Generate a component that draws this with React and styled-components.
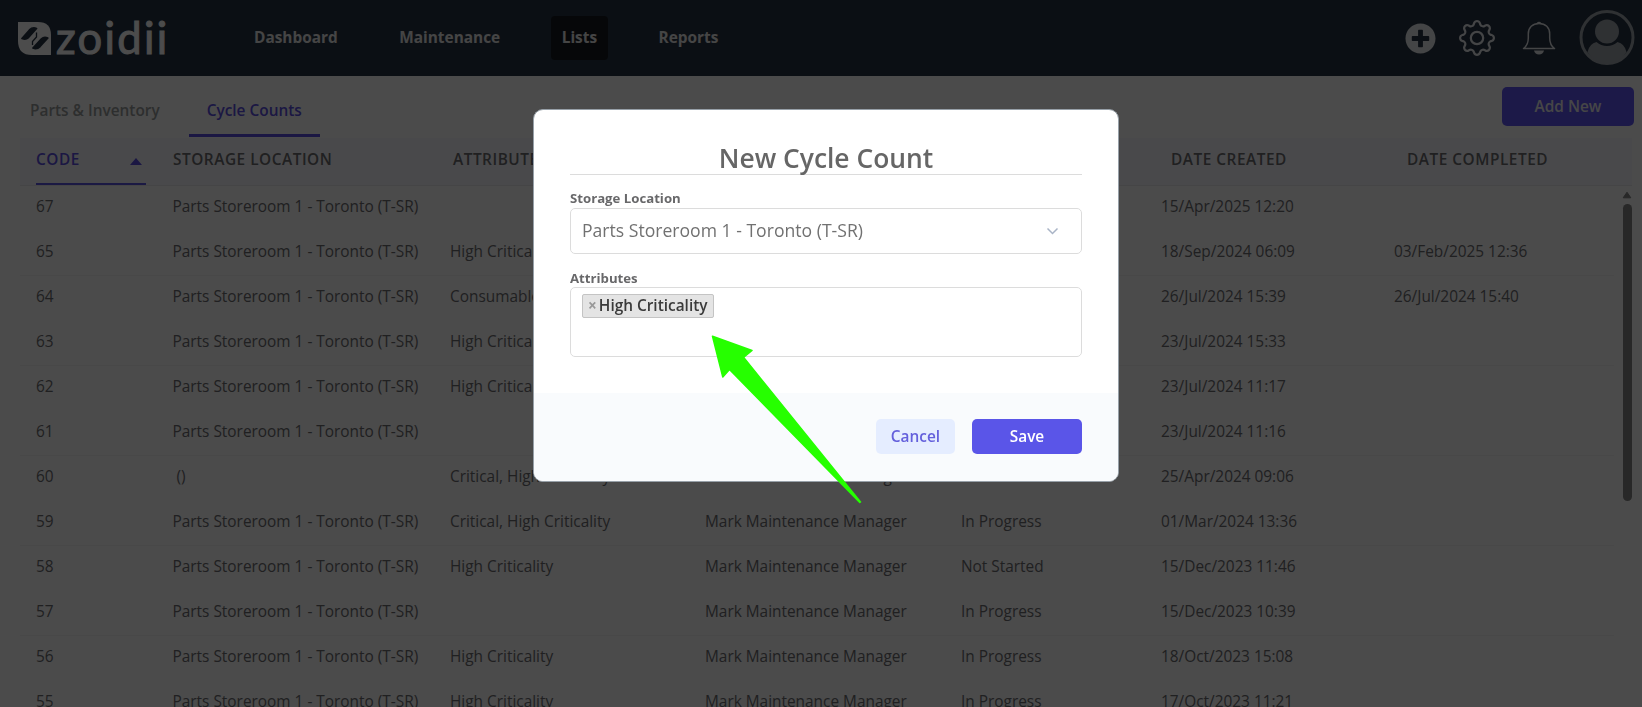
import styled, { createGlobalStyle } from "styled-components";
import { BsGear } from "react-icons/bs";
import { FaPlusCircle } from "react-icons/fa";

const GlobalStyle = createGlobalStyle`
  * {
    box-sizing: border-box;
  }
  body {
    margin: 0;
    overflow: hidden;
    font-family: "Open Sans", "Noto Sans", sans-serif;
    font-size: 15.4px;
    color: #6c6c70;
    background: #fbfbfb;
  }
  button {
    font-family: inherit;
    font-size: inherit;
    border: none;
    padding: 0;
  }
`;

const Page = styled.div`
  height: 707px;
  overflow: hidden;
  display: flex;
  flex-direction: column;
`;

const NavBar = styled.nav`
  flex: none;
  display: flex;
  align-items: center;
  height: 76px;
  padding: 0 7px 0 18px;
  background: #263343;
`;

const Logo = styled.div`
  display: flex;
  align-items: center;
  width: 225.5px;
  color: #fdfdfd;
`;

const LogoText = styled.span`
  margin-left: 5px;
  font-family: Lato, sans-serif;
  font-size: 43.5px;
  font-weight: 400;
  line-height: 44px;
  letter-spacing: 2.3px;
  -webkit-text-stroke: 1px currentColor;
  padding-bottom: 2px;
`;

const NavLinks = styled.div`
  display: flex;
  gap: 40.5px;
  flex: 1;
`;

const NavLink = styled.a`
  display: flex;
  align-items: center;
  height: 44px;
  padding: 0 10.5px 1px;
  border-radius: 4px;
  font-weight: 700;
  color: #e6e6e8;
  background: ${(props) => (props.$active ? "#17191f" : "transparent")};
`;

const NavIcons = styled.div`
  display: flex;
  align-items: center;
  color: #e4e6ea;

  svg {
    display: block;
  }
`;

const IconSlot = styled.div`
  margin-left: ${(props) => props.$gap}px;
`;

const TabBar = styled.div`
  flex: none;
  display: flex;
  justify-content: space-between;
  height: 62px;
  padding: 11px 8px 0 12px;
`;

const Tabs = styled.div`
  display: flex;
  gap: 11px;
`;

const Tab = styled.div`
  height: 50px;
  padding: 13px 18px 0;
  line-height: 22px;
  font-weight: 600;
  color: ${(props) => (props.$active ? "#5a4fe0" : "#989c9c")};
  border-bottom: 3px solid ${(props) => (props.$active ? "#5a4fe0" : "transparent")};
`;

const AddButton = styled.button`
  width: 132px;
  height: 39px;
  border-radius: 5px;
  font-weight: 600;
  color: #e9e9ee;
  background: #5f55f0;
`;

const TableHeader = styled.div`
  flex: none;
  display: grid;
  grid-template-columns: 137px 280px 255px 256px 207px 236px 1fr;
  height: 48px;
  margin: 0 10px 0 20px;
  padding-left: 16px;
  background: #f6f6fa;
  border-bottom: 1px solid #e8e8ea;
  font-weight: 600;
  letter-spacing: 0.52px;
  line-height: 44px;
  white-space: nowrap;
`;

const SortedHeading = styled.div`
  display: flex;
  align-items: center;
  justify-content: space-between;
  width: 110px;
  height: 47px;
  padding: 0 4px 1px 0;
  color: #5a4fe0;
  border-bottom: 2px solid #5a55e0;
`;

const SortArrow = styled.span`
  border-left: 6px solid transparent;
  border-right: 6px solid transparent;
  border-bottom: 7px solid #5a4fe0;
  margin-top: 2px;
`;

const TableBody = styled.div`
  display: flex;
  flex: 1;
  min-height: 0;
  padding: 0 10px 0 20px;
`;

const Rows = styled.div`
  width: 1594px;
`;

const Row = styled.div`
  display: grid;
  grid-template-columns: 136.5px 277.5px 255px 256px 200px 233px 1fr;
  height: 45px;
  padding-left: 16px;
  line-height: 42px;
  white-space: pre;
  border-bottom: 1px solid transparent;

  &:nth-child(even) {
    border-bottom-color: #f0f0f0;
  }
`;

const ScrollBar = styled.div`
  display: flex;
  flex-direction: column;
  align-items: center;
  margin-left: 8px;
  padding-top: 5px;
`;

const ScrollThumb = styled.div`
  width: 9px;
  height: 297px;
  margin-top: 5px;
  border-radius: 5px;
  background: #858585;
`;

const Overlay = styled.div`
  position: fixed;
  inset: 0;
  display: flex;
  justify-content: center;
  align-items: flex-start;
  padding: 109px 0 0 10px;
  background: rgba(0, 0, 0, 0.7);
`;

const Modal = styled.div`
  display: flex;
  flex-direction: column;
  width: 586px;
  height: 373px;
  border: 1px solid #97a0a8;
  border-radius: 10px;
  overflow: hidden;
  background: #fff;
`;

const ModalBody = styled.div`
  flex: 1;
  padding: 29px 36px 0;
`;

const ModalTitle = styled.h2`
  height: 36px;
  margin: 0 0 14px;
  border-bottom: 1px solid #dcdcdc;
  text-align: center;
  font-size: 26.4px;
  font-weight: 600;
  line-height: 38px;
  color: #666;
`;

const Label = styled.div`
  height: 19px;
  font-size: 13.2px;
  font-weight: 700;
  line-height: 19px;
  color: #68686a;
`;

const Select = styled.div`
  display: flex;
  align-items: center;
  justify-content: space-between;
  height: 46px;
  margin-bottom: 15px;
  padding: 0 22px 2px 11px;
  border: 1px solid #dcdcdc;
  border-radius: 5px;
  font-size: 17.6px;
  color: #717171;

  svg {
    margin-top: 2px;
  }
`;

const TagBox = styled.div`
  height: 70px;
  margin-top: -1px;
  padding: 6px 11px;
  border: 1px solid #dcdcdc;
  border-radius: 5px;
`;

const Tag = styled.span`
  display: inline-flex;
  align-items: center;
  height: 24px;
  padding: 0 5px 1px 5px;
  border: 1px solid #c4c4c4;
  border-radius: 2px;
  background: #e4e4e4;
  font-weight: 600;
  color: #3a3a3a;
`;

const TagRemove = styled.span`
  margin-right: 2px;
  font-size: 15.4px;
  font-weight: 700;
  color: #999;
`;

const ModalFooter = styled.div`
  display: flex;
  justify-content: flex-end;
  gap: 17px;
  height: 88px;
  padding: 26px 36px 0;
  background: #f9fbfd;
`;

const FooterButton = styled.button`
  width: ${(props) => (props.$primary ? 110 : 79)}px;
  height: 35px;
  border-radius: 5px;
  font-weight: 600;
  color: ${(props) => (props.$primary ? "#fff" : "#6460dc")};
  background: ${(props) => (props.$primary ? "#5a55e8" : "#e5edff")};
`;

const Pointer = styled.svg`
  position: fixed;
  left: 700px;
  top: 320px;
`;

const storeroom = "Parts Storeroom 1 - Toronto (T-SR)";
const manager = "Mark Maintenance Manager";

const counts = [
  ["67", storeroom, "", manager, "Not Started", "15/Apr/2025 12:20", ""],
  ["65", storeroom, "High Criticality", manager, "Completed", "18/Sep/2024 06:09", "03/Feb/2025 12:36"],
  ["64", storeroom, "Consumable", manager, "Completed", "26/Jul/2024 15:39", "26/Jul/2024 15:40"],
  ["63", storeroom, "High Criticality", manager, "In Progress", "23/Jul/2024 15:33", ""],
  ["62", storeroom, "High Criticality", manager, "In Progress", "23/Jul/2024 11:17", ""],
  ["61", storeroom, "", manager, "In Progress", "23/Jul/2024 11:16", ""],
  ["60", " ()", "Critical, High Criticality", manager, "Not Started", "25/Apr/2024 09:06", ""],
  ["59", storeroom, "Critical, High Criticality", manager, "In Progress", "01/Mar/2024 13:36", ""],
  ["58", storeroom, "High Criticality", manager, "Not Started", "15/Dec/2023 11:46", ""],
  ["57", storeroom, "", manager, "In Progress", "15/Dec/2023 10:39", ""],
  ["56", storeroom, "High Criticality", manager, "In Progress", "18/Oct/2023 15:08", ""],
  ["55", storeroom, "High Criticality", manager, "In Progress", "17/Oct/2023 11:21", ""],
];

const navItems = ["Dashboard", "Maintenance", "Lists", "Reports"];

function LogoMark() {
  return (
    <svg width="33" height="33" viewBox="0 0 33 33">
      <path d="M0 0H20Q33 0 33 13V33H14Q0 33 0 19Z" fill="currentColor" />
      <path
        d="M4 16.500 11.500 8Q14.500 5 18.500 6.500L10 15.800Q8 17.800 4 16.500Z"
        fill="#263343"
        stroke="#263343"
        strokeWidth="1.800"
        strokeLinejoin="round"
      />
      <path
        d="M29.800 16 22 24.500Q19 27.500 15 26L23.500 16.800Q25.800 14.700 29.800 16Z"
        fill="#263343"
        stroke="#263343"
        strokeWidth="1.800"
        strokeLinejoin="round"
      />
      <path d="M18.500 10.500V15L14.500 19.500V23" fill="none" stroke="#263343" strokeWidth="1.300" />
    </svg>
  );
}

function BellIcon() {
  return (
    <svg width="34" height="34" viewBox="0 0 34 34" fill="none">
      <path
        d="M1.500 27.500C5 25 6.300 22 6.300 17V13C6.300 6.500 10.500 2.500 17 2.500S27.700 6.500 27.700 13V17C27.700 22 29 25 32.500 27.500Z"
        stroke="currentColor"
        strokeWidth="1.500"
        strokeLinejoin="round"
      />
      <path d="M14.500 2.200Q17 -.6 19.500 2.200Z" fill="currentColor" />
      <path d="M12 29.500H22Q21 33.500 17 33.500T12 29.500Z" fill="currentColor" />
    </svg>
  );
}

function Avatar() {
  return (
    <svg width="56" height="56" viewBox="0 0 56 56">
      <circle cx="28" cy="27.500" r="26" fill="none" stroke="#9ea3ab" strokeWidth="3" />
      <circle cx="28" cy="21.500" r="12" fill="#9ea3ab" />
      <path
        d="M17.500 32Q22 36 28 36T38.500 32Q45.500 33.500 47.500 42C43 50 36 53.500 28 53.500S13 50 8.500 42Q10.500 33.500 17.500 32Z"
        fill="#9ea3ab"
      />
    </svg>
  );
}

function CycleCountTable() {
  return (
    <>
      <TableHeader>
        <SortedHeading>
          CODE
          <SortArrow />
        </SortedHeading>
        <span>STORAGE LOCATION</span>
        <span>ATTRIBUTES</span>
        <span>ASSIGNED TO</span>
        <span>STATUS</span>
        <span>DATE CREATED</span>
        <span>DATE COMPLETED</span>
      </TableHeader>
      <TableBody>
        <Rows>
          {counts.map((cells) => (
            <Row key={cells[0]}>
              {cells.map((cell, i) => (
                <span key={i}>{cell}</span>
              ))}
            </Row>
          ))}
        </Rows>
        <ScrollBar>
          <svg width="10" height="8" viewBox="0 0 10 8">
            <path d="M5 1.200 8.800 6.800H1.200Z" fill="#858585" stroke="#858585" strokeLinejoin="round" />
          </svg>
          <ScrollThumb />
        </ScrollBar>
      </TableBody>
    </>
  );
}

function NewCycleCountModal() {
  return (
    <Overlay>
      <Modal>
        <ModalBody>
          <ModalTitle>New Cycle Count</ModalTitle>
          <Label>Storage Location</Label>
          <Select>
            {storeroom}
            <svg width="13" height="8" viewBox="0 0 13 8">
              <path d="M1.500 1.500 6.500 6.500 11.500 1.500" fill="none" stroke="#a9b4c6" strokeWidth="1.500" />
            </svg>
          </Select>
          <Label>Attributes</Label>
          <TagBox>
            <Tag>
              <TagRemove>×</TagRemove>
              High Criticality
            </Tag>
          </TagBox>
        </ModalBody>
        <ModalFooter>
          <FooterButton>Cancel</FooterButton>
          <FooterButton $primary>Save</FooterButton>
        </ModalFooter>
      </Modal>
    </Overlay>
  );
}

function App() {
  return (
    <>
      <GlobalStyle />
      <Page>
        <NavBar>
          <Logo>
            <LogoMark />
            <LogoText>zoidii</LogoText>
          </Logo>
          <NavLinks>
            {navItems.map((item) => (
              <NavLink key={item} $active={item === "Lists"}>
                {item}
              </NavLink>
            ))}
          </NavLinks>
          <NavIcons>
            <FaPlusCircle size={31} />
            <IconSlot $gap={23}>
              <BsGear size={36} />
            </IconSlot>
            <IconSlot $gap={27}>
              <BellIcon />
            </IconSlot>
            <IconSlot $gap={23}>
              <Avatar />
            </IconSlot>
          </NavIcons>
        </NavBar>
        <TabBar>
          <Tabs>
            <Tab>Parts &amp; Inventory</Tab>
            <Tab $active>Cycle Counts</Tab>
          </Tabs>
          <AddButton>Add New</AddButton>
        </TabBar>
        <CycleCountTable />
      </Page>
      <NewCycleCountModal />
      <Pointer width="180" height="190" viewBox="0 0 180 190">
        <path
          d="M12.500 16.200 52 30.500 43.500 37.300 160.500 182 159.800 182.500 29.500 49.500 22.800 57Z"
          fill="#26ff00"
          stroke="#26ff00"
          strokeWidth="1.500"
          strokeLinejoin="round"
        />
      </Pointer>
    </>
  );
}

export default App;
